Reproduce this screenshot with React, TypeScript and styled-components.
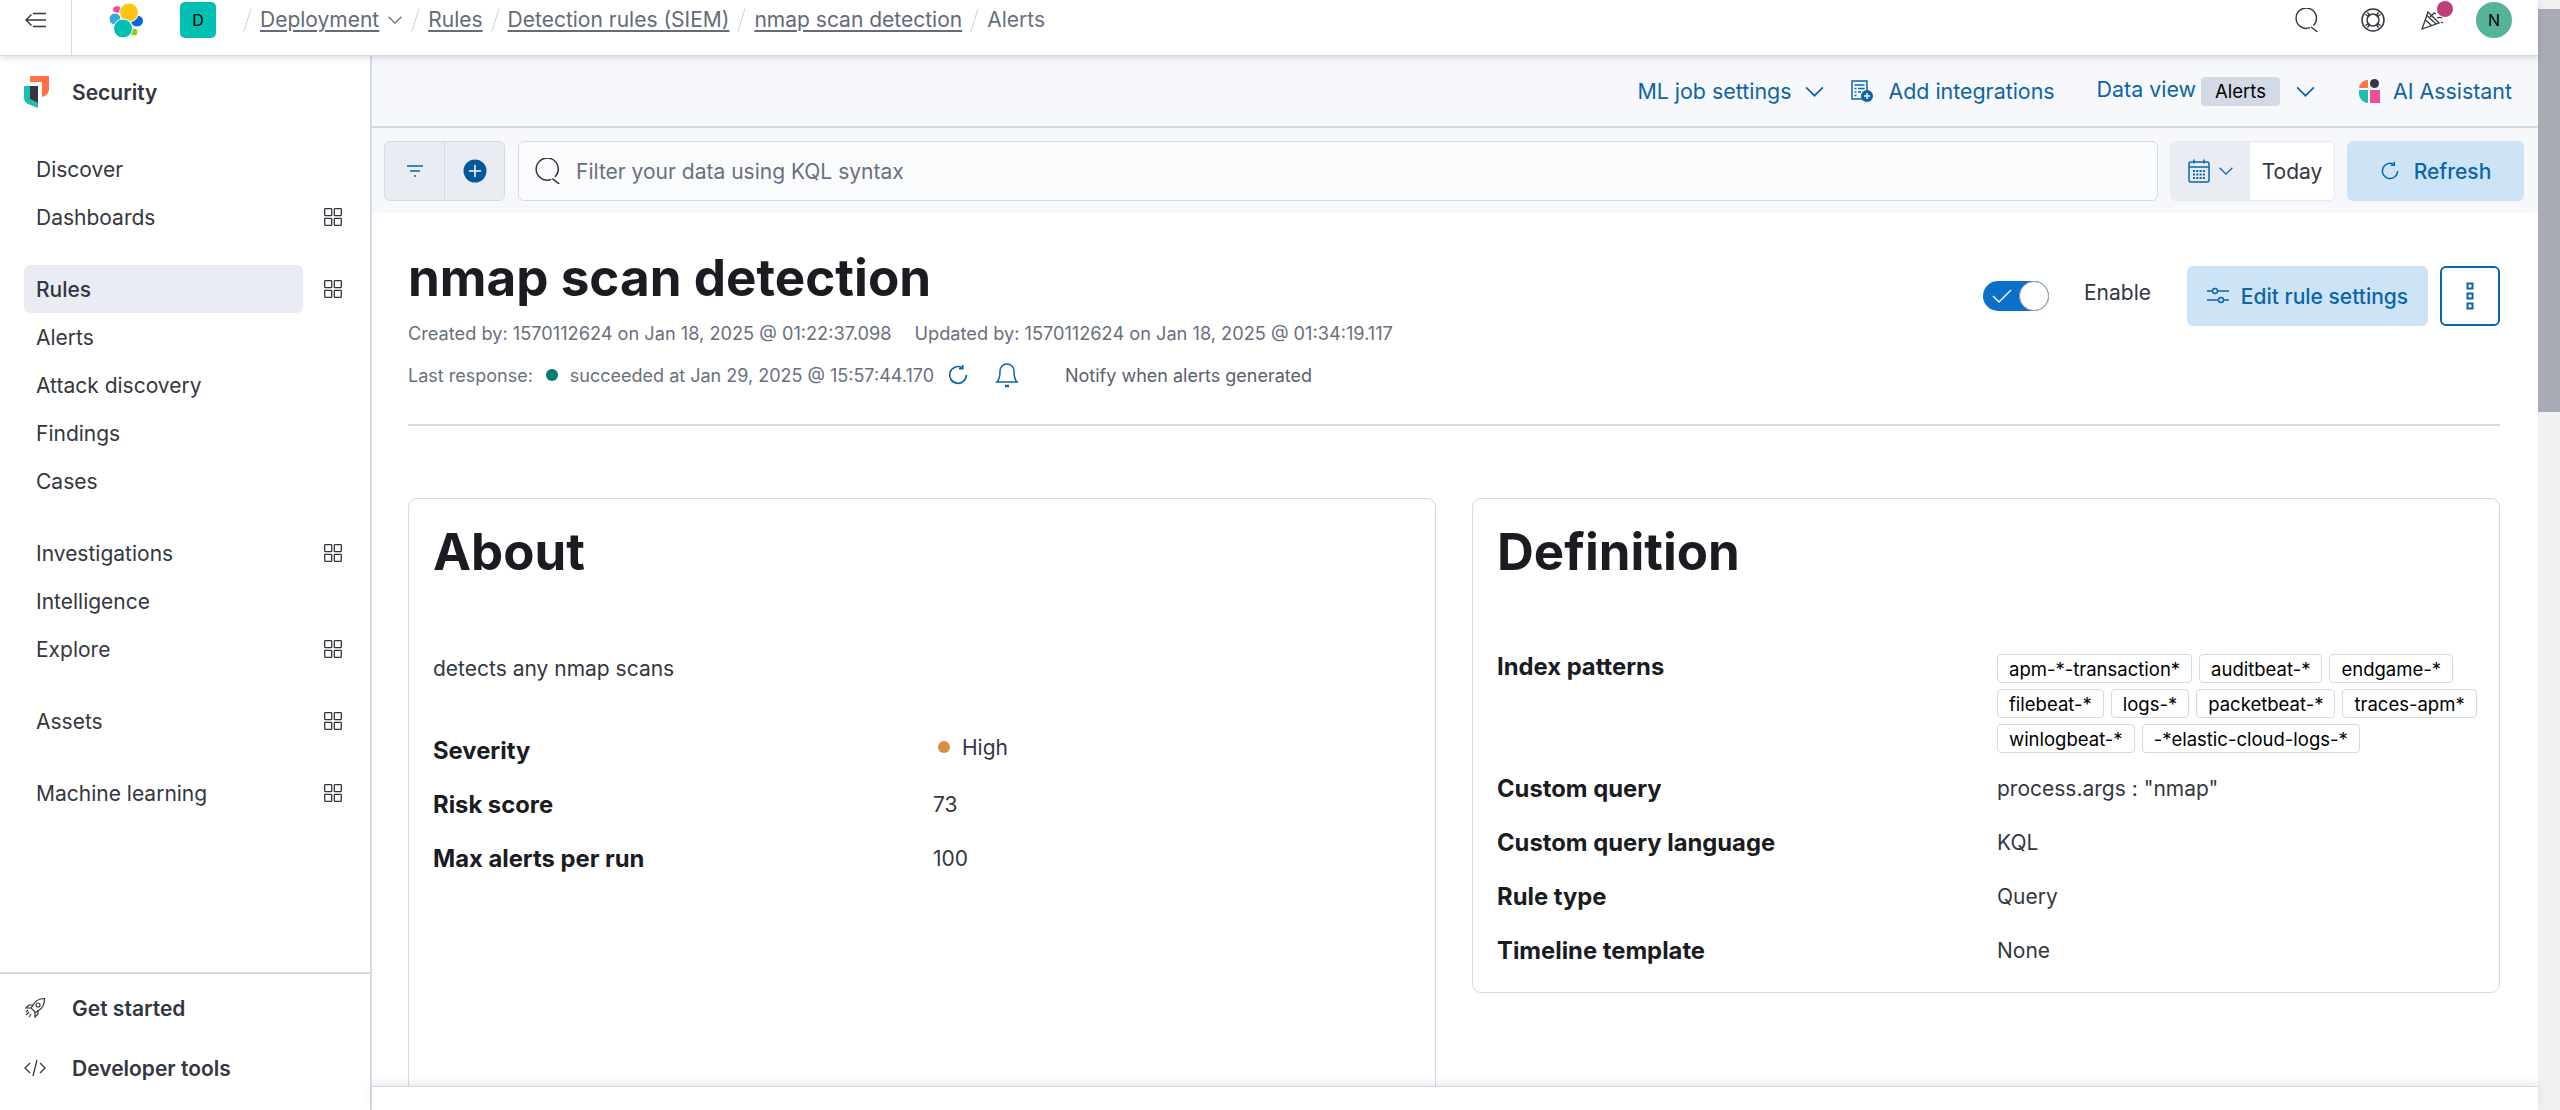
import React from 'react';
import styled, {createGlobalStyle} from 'styled-components';

const GlobalStyle = createGlobalStyle`
  * { box-sizing: border-box; }
  html, body { margin: 0; padding: 0; height: 100%; overflow: hidden; background: #fff; }
  body { font-family: Inter, "Liberation Sans", sans-serif; font-size: 21px; color: #343741; }
`

const BLUE = '#0b64a8';

const Grid = () => (
    <svg width="20" height="20" viewBox="0 0 20 20" fill="none" stroke="#343741" strokeWidth="1.3">
        <rect x="1.700" y="1.700" width="7" height="7" rx=".6"/>
        <rect x="11.300" y="1.700" width="7" height="7" rx=".6"/>
        <rect x="1.700" y="11.300" width="7" height="7" rx=".6"/>
        <rect x="11.300" y="11.300" width="7" height="7" rx=".6"/>
    </svg>
);

const Search = ({size = 24}: {size?: number}) => (
    <svg width={size} height={size} viewBox="0 0 24 24" fill="none" stroke="#343741" strokeWidth="1.4">
        <path d="M15 19.700A10.200 10.200 0 1 1 18.400 17.500"/>
        <path d="M16 19l6.500 5"/>
    </svg>
);

const Chevron = ({size = 20, color = BLUE}: {size?: number; color?: string}) => (
    <svg width={size} height={size} viewBox="0 0 20 20" fill="none" stroke={color} strokeWidth="1.6">
        <path d="M2 6l8 8 8-8"/>
    </svg>
);

const RefreshIcon = ({size = 20}: {size?: number}) => (
    <svg width={size} height={size} viewBox="0 0 20 20" fill="none" stroke={BLUE} strokeWidth="1.5">
        <path d="M13.500 3.200A7.600 7.600 0 1 0 17.600 10"/>
        <path d="M14.300 0.800v3.400h-3.400"/>
    </svg>
);

const ElasticLogo = () => (
    <svg width="36" height="36" viewBox="0 0 36 36" stroke="#fff" strokeWidth="1">
        <ellipse cx="9" cy="7.500" rx="4.500" ry="3.800" fill="#f04e98"/>
        <ellipse cx="7" cy="17" rx="6" ry="6" fill="#36a9e1"/>
        <ellipse cx="29" cy="19" rx="6.500" ry="6" fill="#0b64dd"/>
        <ellipse cx="26" cy="30" rx="4" ry="4" fill="#93c90e"/>
        <circle cx="21" cy="10.500" r="9.500" fill="#fec514"/>
        <circle cx="15" cy="26.500" r="9.500" fill="#00bfb3"/>
    </svg>
);

const SecurityLogo = () => (
    <svg width="26" height="32" viewBox="0 0 26 32">
        <path d="M6 0h19v14a9 9 0 0 1-7 7V6H6z" fill="#ff7044"/>
        <path d="M0 10h6v13l8 4v5L4 28a7 7 0 0 1-4-6z" fill="#1ebfae"/>
        <path d="M6 10h8v17l-8-4z" fill="#343741"/>
    </svg>
);

const Rocket = () => (
    <svg width="22" height="22" viewBox="0 0 22 22" fill="none" stroke="#343741" strokeWidth="1.2">
        <path d="M20.500 1.500c-5 0-9 2-11.500 6.500l-2 3 4.500 4.500 3-2c4.500-2.500 6-6.500 6-12z"/>
        <circle cx="14" cy="8" r="2"/>
        <path d="M9 8H5L2 11h5M14 13v4l-3 3v-5M5 15l-3 3M7 17l-2 3M4 13l-2 2"/>
    </svg>
);

const Code = () => (
    <svg width="22" height="22" viewBox="0 0 22 22" fill="none" stroke="#343741" strokeWidth="1.3">
        <path d="M6 6l-5 5 5 5M16 6l5 5-5 5M13 3L9 19"/>
    </svg>
);

const MenuToggle = () => (
    <svg width="23" height="16" viewBox="0 0 23 16" fill="none" stroke="#343741" strokeWidth="1.4">
        <path d="M9 1.500h13M2 8h20M9 14.500h13M7.500 2.500L2 8l5.500 5.500"/>
    </svg>
);

const Lifebuoy = () => (
    <svg width="24" height="24" viewBox="0 0 24 24" fill="none" stroke="#343741" strokeWidth="1.5">
        <circle cx="12" cy="12" r="11"/>
        <circle cx="12" cy="12" r="6"/>
        <path d="M4.500 6.500l3.500 2.500M6.500 4.500l2.500 3.500M19.500 6.500L16 9M17.500 4.500L15 8M4.500 17.500L8 15M6.500 19.500L9 16M19.500 17.500L16 15M17.500 19.500L15 16"/>
    </svg>
);

const Cheer = () => (
    <svg width="24" height="22" viewBox="0 0 24 22" fill="none" stroke="#343741" strokeWidth="1.3">
        <path d="M7 3L1 20l17-6z"/>
        <path d="M4.500 11l6.500 6M6 6.500l9 8.500M9 8l4-4 2 1M16 9c2-1 3-1 5 0M17 4l1-2M20 13l2 1"/>
    </svg>
);

const Doc = () => (
    <svg width="22" height="22" viewBox="0 0 22 22" fill="none">
        <rect x="1" y="1" width="15" height="18" stroke={BLUE} strokeWidth="1.500"/>
        <path d="M3.500 5h10M3.500 8.500h2M7 8.500h6.500M3.500 12h2M7 12h3M3.500 15.500h2" stroke={BLUE} strokeWidth="1.500"/>
        <circle cx="16" cy="16" r="6" fill={BLUE}/>
        <path d="M16 13v6M13 16h6" stroke="#fff" strokeWidth="1.400"/>
    </svg>
);

const AiLogo = () => (
    <svg width="22" height="24" viewBox="0 0 22 24">
        <path d="M10 1v8H1a8.500 8.500 0 0 1 9-8z" fill="#f9784a"/>
        <circle cx="16.500" cy="4.500" r="4.500" fill="#343741"/>
        <path d="M1 11h9v13a9 9 0 0 1-9-9z" fill="#1ebfae"/>
        <rect x="12" y="11" width="10" height="13" fill="#f04e98"/>
    </svg>
);

const Calendar = () => (
    <svg width="22" height="24" viewBox="0 0 22 24" fill="none" stroke={BLUE} strokeWidth="1.5">
        <rect x="1" y="3" width="20" height="20" rx="2"/>
        <path d="M1 8h20M6 0.500v4M16 0.500v4"/>
        <path d="M5 12h12M5 15.500h12M5 19h12" strokeWidth="2" strokeDasharray="2 1.300"/>
    </svg>
);

const Sliders = () => (
    <svg width="22" height="20" viewBox="0 0 22 20" fill="none" stroke={BLUE} strokeWidth="1.400">
        <circle cx="8" cy="5" r="2.500"/>
        <circle cx="14" cy="14" r="2.500"/>
        <path d="M0 5h5.500M10.500 5H22M0 14h11.500M16.500 14H22"/>
    </svg>
);

const Bell = () => (
    <svg width="24" height="26" viewBox="0 0 24 26" fill="none" stroke={BLUE} strokeWidth="1.5">
        <path d="M12 2a7 7 0 0 0-7 7c0 6-1 9-3 11h20c-2-2-3-5-3-11a7 7 0 0 0-7-7z"/>
        <path d="M10 24h4" strokeWidth="2.500"/>
    </svg>
);

const FilterLines = () => (
    <svg width="18" height="14" viewBox="0 0 18 14" fill="none" stroke={BLUE} strokeWidth="1.500">
        <path d="M1 2h16M4 7h10M8 12h2"/>
    </svg>
);

const PlusFilled = () => (
    <svg width="24" height="24" viewBox="0 0 24 24">
        <circle cx="12" cy="12" r="11.500" fill="#07579b"/>
        <path d="M12 6v12M6 12h12" stroke="#fff" strokeWidth="1.500"/>
    </svg>
);

const Check = () => (
    <svg width="20" height="16" viewBox="0 0 20 16" fill="none" stroke="#fff" strokeWidth="1.400">
        <path d="M1 8l6 6L19 2"/>
    </svg>
);

const Dots = () => (
    <svg width="8" height="28" viewBox="0 0 8 28" fill="none" stroke={BLUE} strokeWidth="2">
        <rect x="1.500" y="1.500" width="5" height="5"/>
        <rect x="1.500" y="11.500" width="5" height="5"/>
        <rect x="1.500" y="21.500" width="5" height="5"/>
    </svg>
);

const crumbs = ['Rules', 'Detection rules (SIEM)', 'nmap scan detection'];
const navGroups: {label: string; grid?: boolean; active?: boolean}[][] = [
    [{label: 'Discover'}, {label: 'Dashboards', grid: true}],
    [{label: 'Rules', grid: true, active: true}, {label: 'Alerts'}, {label: 'Attack discovery'}, {label: 'Findings'}, {label: 'Cases'}],
    [{label: 'Investigations', grid: true}, {label: 'Intelligence'}, {label: 'Explore', grid: true}],
    [{label: 'Assets', grid: true}],
    [{label: 'Machine learning', grid: true}],
];
const patterns = ['apm-*-transaction*', 'auditbeat-*', 'endgame-*', 'filebeat-*', 'logs-*', 'packetbeat-*', 'traces-apm*', 'winlogbeat-*', '-*elastic-cloud-logs-*'];

export default function App() {
    return (
        <Page>
            <GlobalStyle/>
            <Window>
                <Header>
                    <ToggleCell><MenuToggle/></ToggleCell>
                    <LogoCell><ElasticLogo/></LogoCell>
                    <SpaceBadge>D</SpaceBadge>
                    <Crumbs>
                        <Slash/>
                        <CrumbLink>Deployment</CrumbLink>
                        <Chevron size={16} color="#69707d"/>
                        {crumbs.map(c => (
                            <React.Fragment key={c}>
                                <Slash/>
                                <CrumbLink>{c}</CrumbLink>
                            </React.Fragment>
                        ))}
                        <Slash/>
                        <CrumbLast>Alerts</CrumbLast>
                    </Crumbs>
                    <HeaderIcons>
                        <Search/>
                        <Lifebuoy/>
                        <CheerWrap><Cheer/><CheerDot/></CheerWrap>
                        <Avatar>N</Avatar>
                    </HeaderIcons>
                </Header>
                <Body>
                    <Sidebar>
                        <SolutionTitle>
                            <LogoSlot><SecurityLogo/></LogoSlot>
                            Security
                        </SolutionTitle>
                        <Nav>
                            {navGroups.map((group, i) => (
                                <NavGroup key={i}>
                                    {group.map(item => (
                                        <NavRow key={item.label}>
                                            <NavItem $active={item.active}>{item.label}</NavItem>
                                            {item.grid && <Grid/>}
                                        </NavRow>
                                    ))}
                                </NavGroup>
                            ))}
                        </Nav>
                        <SideFooter>
                            <FooterItem><LogoSlot><Rocket/></LogoSlot>Get started</FooterItem>
                            <FooterItem><LogoSlot><Code/></LogoSlot>Developer tools</FooterItem>
                        </SideFooter>
                    </Sidebar>
                    <Main>
                        <ActionBar>
                            <ActionLink $gap={13}>ML job settings <Chevron size={21}/></ActionLink>
                            <ActionLink $gap={15}><Doc/> Add integrations</ActionLink>
                            <DataView $gap={5}>
                                <DataLabel>Data view</DataLabel>
                                <ViewBadge>Alerts</ViewBadge>
                                <Chevron size={21}/>
                            </DataView>
                            <AiLink $gap={13}><AiLogo/> AI Assistant</AiLink>
                        </ActionBar>
                        <QueryBar>
                            <FilterGroup>
                                <FilterBtn $divided><FilterLines/></FilterBtn>
                                <FilterBtn><PlusFilled/></FilterBtn>
                            </FilterGroup>
                            <QueryInput>
                                <Search size={26}/>
                                <Placeholder>Filter your data using KQL syntax</Placeholder>
                            </QueryInput>
                            <DatePicker>
                                <DateBtn><Calendar/><Chevron size={16}/></DateBtn>
                                <DateValue>Today</DateValue>
                            </DatePicker>
                            <RefreshBtn><RefreshIcon/>Refresh</RefreshBtn>
                        </QueryBar>
                        <Content>
                            <RuleHeader>
                                <div>
                                    <Title>nmap scan detection</Title>
                                    <MetaRow>
                                        <span>Created by: 1570112624 on Jan 18, 2025 @ 01:22:37.098</span>
                                        <span>Updated by: 1570112624 on Jan 18, 2025 @ 01:34:19.117</span>
                                    </MetaRow>
                                    <StatusRow>
                                        <span>Last response:</span>
                                        <StatusDot/>
                                        <span>succeeded at Jan 29, 2025 @ 15:57:44.170</span>
                                        <RefreshSlot><RefreshIcon size={22}/></RefreshSlot>
                                        <BellSlot><Bell/></BellSlot>
                                        <NotifyText>Notify when alerts generated</NotifyText>
                                    </StatusRow>
                                </div>
                                <RuleActions>
                                    <Switch>
                                        <Check/>
                                        <Knob/>
                                    </Switch>
                                    <EnableLabel>Enable</EnableLabel>
                                    <EditBtn><Sliders/>Edit rule settings</EditBtn>
                                    <MoreBtn><Dots/></MoreBtn>
                                </RuleActions>
                            </RuleHeader>
                            <Divider/>
                            <Cards>
                                <Card>
                                    <CardTitle>About</CardTitle>
                                    <Description>detects any nmap scans</Description>
                                    <AboutList>
                                        <Term>Severity</Term>
                                        <Severity><SeverityDot/>High</Severity>
                                        <Term>Risk score</Term>
                                        <Value>73</Value>
                                        <Term>Max alerts per run</Term>
                                        <Value>100</Value>
                                    </AboutList>
                                </Card>
                                <Card $short>
                                    <CardTitle>Definition</CardTitle>
                                    <DefinitionList>
                                        <Term>Index patterns</Term>
                                        <Tags>
                                            {patterns.map(p => <Tag key={p}>{p}</Tag>)}
                                        </Tags>
                                        <Term>Custom query</Term>
                                        <Value>process.args : "nmap"</Value>
                                        <Term>Custom query language</Term>
                                        <Value>KQL</Value>
                                        <Term>Rule type</Term>
                                        <Value>Query</Value>
                                        <Term>Timeline template</Term>
                                        <Value>None</Value>
                                    </DefinitionList>
                                </Card>
                            </Cards>
                        </Content>
                        <BottomBar/>
                    </Main>
                </Body>
            </Window>
            <ScrollTrack><ScrollThumb/></ScrollTrack>
        </Page>
    );
}

const Page = styled.div`
  display: flex;
  width: 100vw;
  height: 100vh;
  overflow: hidden;
`
const Window = styled.div`
  flex: 1;
  min-width: 0;
  display: flex;
  flex-direction: column;
`
const ScrollTrack = styled.div`
  width: 22px;
  background: #f1f1f4;
  padding-top: 9px;
`
const ScrollThumb = styled.div`
  height: 403px;
  background: #a8abb3;
`
const Header = styled.header`
  height: 56px;
  flex: none;
  display: flex;
  align-items: center;
  padding-bottom: 16px;
  border-bottom: 1px solid #d3dae6;
  box-shadow: 0 2px 6px rgba(60, 70, 90, .18);
  position: relative;
  z-index: 2;
  background: #fff;
`
const ToggleCell = styled.div`
  width: 72px;
  align-self: stretch;
  margin-bottom: -16px;
  padding-bottom: 16px;
  display: flex;
  align-items: center;
  justify-content: center;
  border-right: 1px solid #d3dae6;
`
const LogoCell = styled.div`
  width: 108px;
  display: flex;
  justify-content: center;
`
const SpaceBadge = styled.div`
  width: 36px;
  height: 36px;
  border-radius: 5px;
  background: #00bfb3;
  color: #000;
  font-size: 16px;
  display: flex;
  align-items: center;
  justify-content: center;
`
const Crumbs = styled.nav`
  display: flex;
  align-items: center;
  margin-left: 27px;
  gap: 8px;
  flex: 1;
  font-size: 21px;
  color: #646a77;
`
const Slash = styled.span`
  width: 1px;
  height: 24px;
  background: #c9d1df;
  transform: rotate(17deg);
  margin: 0 4px;
`
const CrumbLink = styled.span`
  text-decoration: underline;
  text-decoration-thickness: 2px;
  text-underline-offset: 3px;
`
const CrumbLast = styled.span`
  color: #69707d;
`
const HeaderIcons = styled.div`
  display: flex;
  align-items: center;
  padding-right: 26px;
  gap: 42px;
`
const CheerWrap = styled.div`
  position: relative;
  display: flex;
  margin-left: -6px;
  margin-right: -11px;
`
const CheerDot = styled.span`
  position: absolute;
  top: -8px;
  right: -8px;
  width: 16px;
  height: 16px;
  border-radius: 50%;
  background: #bd3f78;
`
const Avatar = styled.div`
  width: 36px;
  height: 36px;
  border-radius: 50%;
  background: #54b399;
  color: #000;
  font-size: 16px;
  display: flex;
  align-items: center;
  justify-content: center;
`
const Body = styled.div`
  flex: 1;
  min-height: 0;
  display: flex;
`
const Sidebar = styled.aside`
  width: 372px;
  flex: none;
  display: flex;
  flex-direction: column;
  border-right: 2px solid #d3dae6;
  background: #fff;
`
const SolutionTitle = styled.div`
  height: 72px;
  display: flex;
  align-items: center;
  font-weight: 600;
  color: #343741;
`
const LogoSlot = styled.span`
  width: 72px;
  padding-left: 24px;
  display: flex;
  align-items: center;
`
const Nav = styled.nav`
  flex: 1;
  padding: 17px 24px 0;
  display: flex;
  flex-direction: column;
  gap: 24px;
`
const NavGroup = styled.div`
  display: flex;
  flex-direction: column;
`
const NavRow = styled.div`
  height: 48px;
  display: flex;
  align-items: center;
  justify-content: space-between;
  padding-right: 3px;
`
const NavItem = styled.div<{$active?: boolean}>`
  width: 279px;
  height: 48px;
  padding-left: 12px;
  border-radius: 6px;
  display: flex;
  align-items: center;
  background: ${p => (p.$active ? '#e9edf3' : 'transparent')};
  font-weight: ${p => (p.$active ? 500 : 400)};
`
const SideFooter = styled.div`
  height: 138px;
  flex: none;
  border-top: 2px solid #d3dae6;
  padding-top: 4px;
`
const FooterItem = styled.div`
  height: 60px;
  display: flex;
  align-items: center;
  font-weight: 600;
`
const Main = styled.main`
  flex: 1;
  min-width: 0;
  display: flex;
  flex-direction: column;
`
const ActionBar = styled.div`
  height: 72px;
  flex: none;
  display: flex;
  align-items: center;
  justify-content: flex-end;
  gap: 26px;
  padding-right: 26px;
  background: #f7f8fc;
  border-bottom: 2px solid #d3dae6;
  color: ${BLUE};
  font-size: 21.4px;
`
const ActionLink = styled.div<{$gap: number}>`
  display: flex;
  align-items: center;
  gap: ${p => p.$gap}px;
`
const DataView = styled(ActionLink)`
  margin-left: 16px;
`
const AiLink = styled(ActionLink)`
  margin-left: 16px;
`
const DataLabel = styled.span`
  margin-bottom: 4px;
`
const ViewBadge = styled.span`
  background: #d3dae6;
  color: #000;
  border-radius: 4px;
  font-size: 18.5px;
  height: 29px;
  padding: 0 14px;
  margin-right: 10px;
  display: flex;
  align-items: center;
`
const QueryBar = styled.div`
  height: 85px;
  flex: none;
  display: flex;
  align-items: center;
  padding: 1px 14px 0 12px;
  background: #f7f8fc;
`
const FilterGroup = styled.div`
  width: 121px;
  height: 60px;
  display: flex;
  border-radius: 6px;
  border: 1px solid #d3dae6;
  background: #e9edf3;
  margin-right: 13px;
`
const FilterBtn = styled.div<{$divided?: boolean}>`
  flex: 1;
  display: flex;
  align-items: center;
  justify-content: center;
  border-right: ${p => (p.$divided ? '1px solid #d3dae6' : 'none')};
`
const QueryInput = styled.div`
  flex: 1;
  height: 60px;
  display: flex;
  align-items: center;
  gap: 15px;
  padding-left: 16px;
  background: #fafbfd;
  border: 1px solid #d3dae6;
  border-radius: 6px;
`
const Placeholder = styled.span`
  color: #69707d;
`
const DatePicker = styled.div`
  width: 165px;
  height: 60px;
  margin-left: 12px;
  display: flex;
  border: 1px solid #e4e8f0;
  border-radius: 6px;
  overflow: hidden;
  background: #fff;
`
const DateBtn = styled.div`
  width: 79px;
  display: flex;
  align-items: center;
  justify-content: center;
  gap: 8px;
  background: #e9edf3;
`
const DateValue = styled.div`
  flex: 1;
  display: flex;
  align-items: center;
  justify-content: center;
  color: #343741;
`
const RefreshBtn = styled.div`
  width: 177px;
  height: 60px;
  margin-left: 12px;
  display: flex;
  align-items: center;
  justify-content: center;
  gap: 14px;
  background: #cce4f5;
  border-radius: 6px;
  color: ${BLUE};
  font-weight: 500;
`
const Content = styled.div`
  flex: 1;
  min-height: 0;
  overflow: hidden;
  padding: 0 38px 0 36px;
  background: #fff;
`
const RuleHeader = styled.div`
  display: flex;
  justify-content: space-between;
  padding-top: 29px;
`
const Title = styled.h1`
  margin: 0;
  font-size: 51.2px;
  line-height: 70px;
  font-weight: 700;
  color: #1a1c21;
`
const MetaRow = styled.div`
  display: flex;
  gap: 23px;
  margin-top: 9px;
  line-height: 24px;
  font-size: 18.2px;
  color: #69707d;
`
const StatusRow = styled.div`
  display: flex;
  align-items: center;
  margin-top: 12px;
  height: 36px;
  font-size: 18px;
  color: #69707d;
`
const StatusDot = styled.span`
  width: 12px;
  height: 12px;
  border-radius: 50%;
  background: #017d73;
  margin: 0 12px 0 13px;
`
const RefreshSlot = styled.span`
  display: flex;
  margin-left: 13px;
`
const BellSlot = styled.span`
  display: flex;
  margin: 0 46px 0 26px;
`
const NotifyText = styled.span`
  color: #5a606e;
`
const RuleActions = styled.div`
  display: flex;
  align-items: flex-start;
  padding-top: 24px;
`
const Switch = styled.div`
  position: relative;
  top: 15px;
  width: 66px;
  height: 30px;
  border-radius: 15px;
  background: #0a70c8;
  padding: 7px 0 0 9px;
  display: flex;
  align-items: flex-start;
`
const Knob = styled.span`
  position: absolute;
  right: 0;
  top: 0;
  width: 30px;
  height: 30px;
  border-radius: 50%;
  background: #fff;
  border: 1px solid #98a2b3;
`
const EnableLabel = styled.span`
  margin: 0 36px 0 35px;
  line-height: 54px;
`
const EditBtn = styled.div`
  width: 241px;
  height: 60px;
  display: flex;
  align-items: center;
  justify-content: center;
  gap: 12px;
  background: #cce4f5;
  border-radius: 6px;
  color: ${BLUE};
  font-weight: 500;
`
const MoreBtn = styled.div`
  width: 60px;
  height: 60px;
  margin-left: 12px;
  display: flex;
  align-items: center;
  justify-content: center;
  border: 2px solid ${BLUE};
  border-radius: 6px;
  background: #fff;
`
const Divider = styled.hr`
  margin: 31px 0 0;
  border: 0;
  border-top: 2px solid #d3dae6;
`
const Cards = styled.div`
  display: grid;
  grid-template-columns: 1fr 1fr;
  gap: 36px;
  align-items: start;
  margin-top: 72px;
`
const Card = styled.section<{$short?: boolean}>`
  border: 1px solid #d3dae6;
  border-radius: 9px;
  padding: 26px 24px 24px;
  height: ${p => (p.$short ? '495px' : '700px')};
`
const CardTitle = styled.h2`
  margin: 0;
  font-size: 51px;
  line-height: 54px;
  font-weight: 700;
  color: #1a1c21;
`
const Description = styled.p`
  margin: 74px 0 0;
  line-height: 32px;
`
const AboutList = styled.dl`
  margin: 50px 0 0;
  display: grid;
  grid-template-columns: 500px 1fr;
  grid-auto-rows: 54px;
`
const DefinitionList = styled.dl`
  margin: 72px 0 0;
  display: grid;
  grid-template-columns: 500px 1fr;
  grid-auto-rows: minmax(54px, auto);
`
const Term = styled.dt`
  font-weight: 700;
  color: #1a1c21;
  line-height: 32px;
  font-size: 23.8px;
`
const Value = styled.dd`
  margin: 0;
  line-height: 32px;
  color: #343741;
`
const Severity = styled.dd`
  margin: 0 0 0 5px;
  display: flex;
  align-items: center;
  height: 24px;
  gap: 12px;
`
const SeverityDot = styled.span`
  width: 12px;
  height: 12px;
  border-radius: 50%;
  background: #da8b45;
`
const Tags = styled.dd`
  margin: 0 -12px 0 0;
  padding: 3px 0 20px;
  display: flex;
  flex-wrap: wrap;
  gap: 6px 7px;
`
const Tag = styled.span`
  height: 29px;
  padding: 0 11px;
  border: 1px solid #d3dae6;
  border-radius: 4px;
  background: #fff;
  color: #000;
  font-size: 18.5px;
  display: flex;
  align-items: center;
`
const BottomBar = styled.div`
  height: 24px;
  flex: none;
  background: #fff;
  border-top: 1px solid #d3dae6;
  box-shadow: 0 -3px 8px rgba(60, 70, 90, .12);
  position: relative;
`
